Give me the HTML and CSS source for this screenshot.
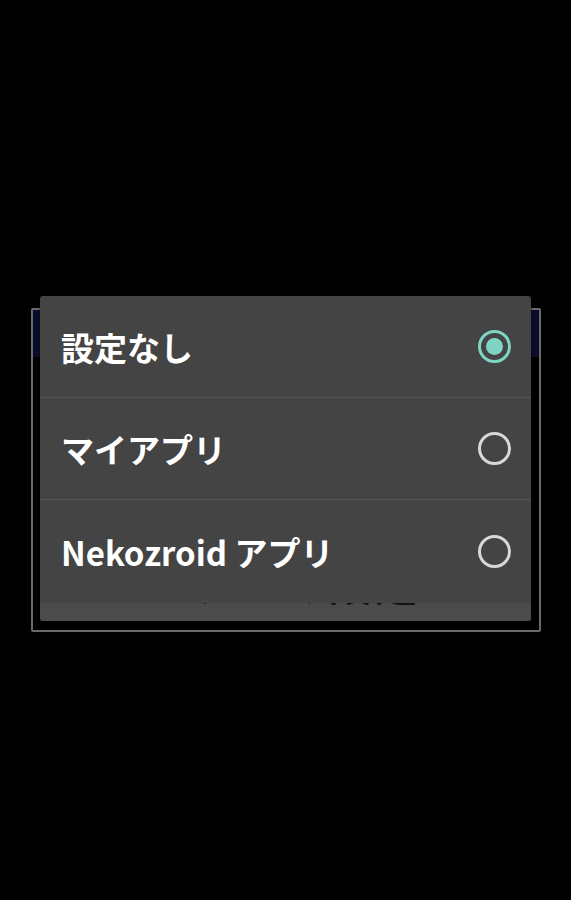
FILE: index.html
```html
<!DOCTYPE html>
<html lang="ja">
<head>
  <meta charset="UTF-8">
  <title>アプリ選択</title>
  <meta name="viewport" content="width=device-width, initial-scale=1.0">
  <link rel="stylesheet" href="styles.css">
</head>
<body>
  <div class="screen">
    <div class="dialog">
      <div class="dialog-title"></div>
      <div class="popup">
        <div class="row">
          <span class="label">設定なし</span>
          <span class="radio checked"></span>
        </div>
        <div class="row">
          <span class="label">マイアプリ</span>
          <span class="radio"></span>
        </div>
        <div class="row">
          <span class="label">Nekozroid アプリ</span>
          <span class="radio"></span>
        </div>
        <div class="peek"><span>テーマ設定</span></div>
      </div>
    </div>
  </div>
</body>
</html>
```

FILE: styles.css
```css
html, body { margin:0; padding:0; background:#000; }
body { font-family:"Noto Sans CJK JP","Noto Sans",sans-serif; }
.screen { width:571px; height:900px; padding-top:308px; box-sizing:border-box; }
.dialog { position:relative; margin-left:31px; width:510px; height:324px; box-sizing:border-box; border:2px solid #6a6a6a; border-radius:2px; }
.dialog-title { height:47px; background:#0b0b2c; }
.popup { position:absolute; top:-14px; left:7px; width:491px; height:325px; background:#444; border-radius:3px; overflow:hidden; display:flex; flex-direction:column; box-shadow:0 1px 3px rgba(0,0,0,0.5); }
.row { height:102px; flex:none; display:flex; align-items:center; justify-content:space-between; padding:0 20px 0 21px; border-bottom:1px solid #555; box-sizing:border-box; }
.row:nth-child(3) { border-bottom:none; height:103px; }
.label { color:#fff; font-size:33px; font-weight:700; }
.radio { width:27px; height:27px; border:3px solid #d8d8d8; border-radius:50%; display:flex; align-items:center; justify-content:center; }
.radio.checked { border-color:#7fd5c4; }
.radio.checked::after { content:""; width:17px; height:17px; border-radius:50%; background:#7fd5c4; }
.peek { flex:1; background:#4b4b4b; overflow:hidden; position:relative; }
.peek span { position:absolute; left:150px; top:-54px; font-size:44px; font-weight:700; line-height:1.5; color:#111; letter-spacing:2px; }
```
